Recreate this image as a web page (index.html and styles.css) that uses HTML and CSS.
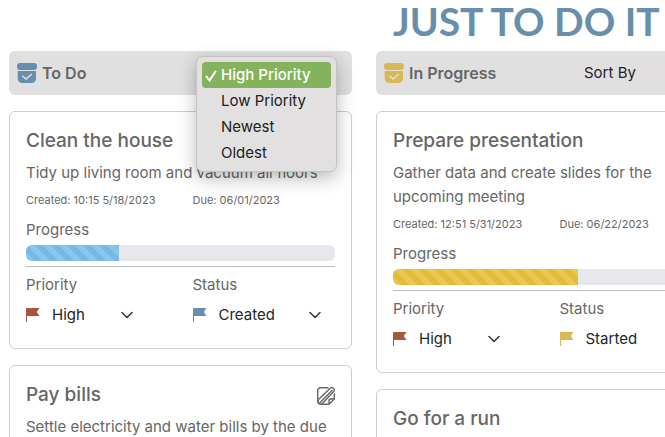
FILE: index.html
```html
<!DOCTYPE html>
<html lang="en">
<head>
<meta charset="utf-8">
<meta name="viewport" content="width=device-width, initial-scale=1">
<title>Just To Do It</title>
<link rel="stylesheet" href="styles.css">
</head>
<body>
<svg class="sprite" aria-hidden="true">
  <symbol id="box" viewBox="0 0 20 20">
    <rect x="0" y="0" width="20" height="7" rx="3"/>
    <path fill-rule="evenodd" d="M.700 8h18.300v7.500a4.500 4.500 0 0 1-4.500 4.500H5.200A4.500 4.500 0 0 1 .700 15.500zM5.800 12.300l-1 1 4.200 3.800 6.400-5.500-1-1.100-5.400 4.600z"/>
  </symbol>
  <symbol id="flag" viewBox="0 0 14 14">
    <path d="M1 0h12.500L10.800 4l2.700 4H1v6H0V1a1 1 0 0 1 1-1z"/>
  </symbol>
  <symbol id="chevron" viewBox="0 0 16 16">
    <path d="M3 5.500l5 5 5-5" fill="none" stroke="#343a40" stroke-width="1.600" stroke-linecap="round" stroke-linejoin="round"/>
  </symbol>
  <symbol id="edit" viewBox="0 0 18 18">
    <g fill="none" stroke="currentColor" stroke-width="1.400" stroke-linecap="round" stroke-linejoin="round">
      <path d="M11 .700H3.500A2.800 2.800 0 0 0 .700 3.500v11a2.800 2.800 0 0 0 2.800 2.800h8.500l5.300-5.300V7M12 17v-3.700a1.300 1.300 0 0 1 1.300-1.300H17"/>
      <path d="M1.200 15.200v-2.400L13.200 1.300a2 2 0 0 1 3.300.2 2.300 2.300 0 0 1 .2 3L4.800 17M2.600 16L15 3.400"/>
    </g>
  </symbol>
</svg>
<main class="board">
  <h1 class="brand">JUST TO DO IT</h1>

  <section class="column blue">
    <header class="column-head">
      <svg class="box-icon"><use href="#box"/></svg>
      <h2>To Do</h2>
      <div class="sort">
        <select class="sort-select" aria-label="Sort To Do by"><option></option></select>
        <ul class="menu" role="listbox" aria-label="Sort order">
          <li role="option" aria-selected="true"><svg class="tick" viewBox="0 0 12 12"><path d="M1.500 6.500l3 4 6-9"/></svg>High Priority</li>
          <li role="option">Low Priority</li>
          <li role="option">Newest</li>
          <li role="option">Oldest</li>
        </ul>
      </div>
    </header>
    <article class="card">
      <h3>Clean the house</h3>
      <p class="text">Tidy up living room and vacuum all floors</p>
      <div class="pair dates"><span>Created: 10:15 5/18/2023</span><span>Due: 06/01/2023</span></div>
      <p class="label">Progress</p>
      <div class="track"><div class="fill" style="width:30%"></div></div>
      <hr>
      <div class="pair">
        <div>
          <label for="p1">Priority</label>
          <div class="field"><svg class="flag red"><use href="#flag"/></svg><span class="pick priority"><select id="p1"><option>High</option></select><svg class="chevron"><use href="#chevron"/></svg></span></div>
        </div>
        <div>
          <label for="s1">Status</label>
          <div class="field"><svg class="flag"><use href="#flag"/></svg><span class="pick status"><select id="s1"><option>Created</option></select><svg class="chevron"><use href="#chevron"/></svg></span></div>
        </div>
      </div>
    </article>
    <article class="card">
      <div class="card-top"><h3>Pay bills</h3><button class="edit" aria-label="Edit"><svg><use href="#edit"/></svg></button></div>
      <p class="text">Settle electricity and water bills by the due</p>
    </article>
  </section>

  <section class="column yellow">
    <header class="column-head">
      <svg class="box-icon"><use href="#box"/></svg>
      <h2>In Progress</h2>
      <div class="sort"><select class="sort-select" aria-label="Sort In Progress by"><option>Sort By</option></select></div>
    </header>
    <article class="card">
      <h3>Prepare presentation</h3>
      <p class="text">Gather data and create slides for the upcoming meeting</p>
      <div class="pair dates"><span>Created: 12:51 5/31/2023</span><span>Due: 06/22/2023</span></div>
      <p class="label">Progress</p>
      <div class="track"><div class="fill" style="width:60%"></div></div>
      <hr>
      <div class="pair">
        <div>
          <label for="p2">Priority</label>
          <div class="field"><svg class="flag red"><use href="#flag"/></svg><span class="pick priority"><select id="p2"><option>High</option></select><svg class="chevron"><use href="#chevron"/></svg></span></div>
        </div>
        <div>
          <label for="s2">Status</label>
          <div class="field"><svg class="flag"><use href="#flag"/></svg><span class="pick status"><select id="s2"><option>Started</option></select><svg class="chevron"><use href="#chevron"/></svg></span></div>
        </div>
      </div>
    </article>
    <article class="card">
      <h3>Go for a run</h3>
    </article>
  </section>
</main>
</body>
</html>
```
FILE: styles.css
```css
* { box-sizing: border-box; }
html { overflow: hidden; }
body {
  margin: 0;
  background: #fff;
  color: #666;
  font: 15px/24px Inter, "Liberation Sans", sans-serif;
}
h1, h2, h3, p, ul { margin: 0; padding: 0; }
.sprite { position: absolute; width: 0; height: 0; }

.board {
  display: grid;
  grid-template-columns: repeat(2, minmax(343px, 1fr));
  column-gap: 24px;
  padding: 0 9px;
}
.brand {
  grid-column: 2;
  padding: 0 17px;
  height: 51px;
  color: #678fab;
  font: 700 39px/42px Lato, sans-serif;
  white-space: nowrap;
}
.blue { --accent: #678fab; --bar: #74b9e7; }
.yellow { --accent: #d9b953; --bar: #e3bd32; }
.column { display: flex; flex-direction: column; gap: 16px; }

.column-head {
  display: flex;
  align-items: center;
  gap: 5px;
  height: 44px;
  padding: 0 8px;
  border-radius: 6px;
  background: #e0e0e0;
}
.column-head h2 { font-size: 16px; font-weight: 600; }
.box-icon { width: 20px; height: 20px; fill: var(--accent); }
.sort { position: relative; width: 139px; margin-left: auto; }
select {
  width: 100%;
  appearance: none;
  border: 0;
  background: transparent;
  color: #212529;
  font: inherit;
}
.sort-select { display: block; height: 34px; padding: 0 12px; border-radius: 6px; background: #e1dfdf; }

.menu {
  position: absolute;
  top: 0;
  left: -9px;
  z-index: 1;
  width: 141px;
  padding: 5px;
  border: 1px solid #c4c3c3;
  border-radius: 7px;
  background: #e2e0e1;
  box-shadow: 0 6px 18px rgba(0, 0, 0, .28);
  color: #212121;
  line-height: 26px;
  list-style: none;
}
.menu li { position: relative; padding-left: 19px; border-radius: 4px; }
.menu [aria-selected] { background: #84b35b; color: #fff; font-weight: 500; }
.tick {
  position: absolute;
  top: 8px;
  left: 3px;
  width: 12px;
  height: 12px;
  fill: none;
  stroke: #fff;
  stroke-width: 2;
  stroke-linecap: round;
}

.card { padding: 16px 16px 15px; border: 1px solid #cdcdcd; border-radius: 6px; }
.card h3 { margin-bottom: 7px; font-size: 19px; font-weight: 500; line-height: 26px; }
.card-top { display: flex; justify-content: space-between; }
.edit { width: 18px; height: 24px; padding: 4px 0 0; border: 0; background: none; color: #666; }
.edit svg { display: block; width: 18px; height: 18px; }
.pair { display: grid; grid-template-columns: 1fr 1fr; column-gap: 24px; }
.dates { margin: 7px 0 10px; font-size: 11px; line-height: 16px; white-space: nowrap; }
.label { margin-bottom: 3px; }
.track { height: 16px; border-radius: 6px; background: #e7e8ec; overflow: hidden; }
.fill {
  height: 100%;
  background: var(--bar) linear-gradient(45deg, rgba(255, 255, 255, .17) 25%, transparent 25% 50%, rgba(255, 255, 255, .17) 50% 75%, transparent 75%) 0 0 / 16px 16px;
}
hr { height: 1px; margin: 5px 0 6px; border: 0; background: #bdbdbd; }
label { display: block; }
.field { display: flex; align-items: center; height: 36px; }
.flag { width: 14px; height: 14px; fill: var(--accent); }
.red { fill: #a6583d; }
.pick { display: grid; align-items: center; }
.pick > * { grid-area: 1 / 1; }
.pick select { height: 36px; padding: 0 36px 0 12px; }
.chevron { justify-self: end; width: 16px; height: 16px; margin-right: 10px; pointer-events: none; }
.priority { width: 105px; }
.status { width: 126px; }
```
